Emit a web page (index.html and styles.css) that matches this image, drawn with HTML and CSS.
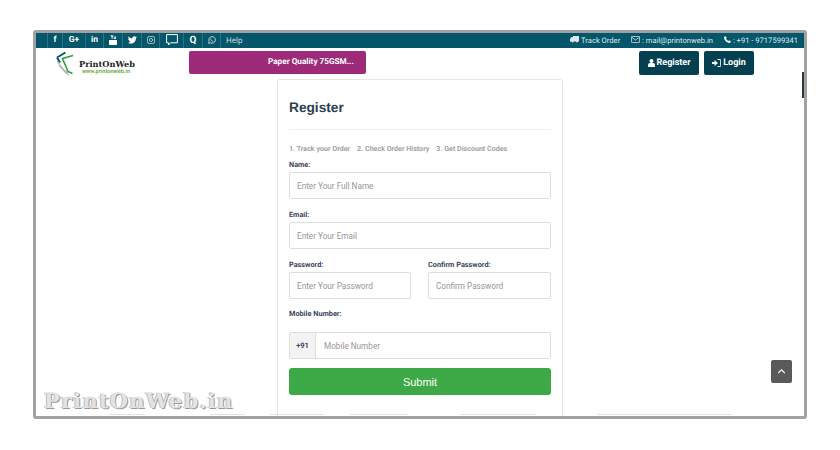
FILE: index.html
```html
<!DOCTYPE html>
<html lang="en">
<head>
    <meta charset="UTF-8">
    <title>Register - PrintOnWeb</title>
    <link rel="stylesheet" href="styles.css">
</head>
<body>
    <div class="frame">
        <div class="topbar">
            <ul class="social">
                <li class="w15"><b>f</b></li>
                <li class="w23"><b>G+</b></li>
                <li class="w18"><b>in</b></li>
                <li class="w19">
                    <svg width="8" height="10" viewBox="0 0 8 10"><path fill="#fff" d="M1.500 0h1l.6 1.600L3.700 0h.8L3.500 2.600V4h-.8V2.600zM4.800 1.200h.7v2h.8v-2H7V4H4.800zM0 5h8v4a1 1 0 0 1-1 1H1a1 1 0 0 1-1-1z"/></svg>
                </li>
                <li class="w19">
                    <svg width="9" height="8" viewBox="0 0 10 9"><path fill="#fff" d="M10 1.500 8.900 2.500C8.900 6 6.400 8.500 3.300 8.500 2 8.500.9 8.100 0 7.500c1.100.1 2.200-.2 3-.9-.9 0-1.700-.6-2-1.500h.9C.9 4.800.2 4 .2 3c.3.100.6.200.9.200C.2 2.500 0 1.300.5.500 1.600 1.800 3.100 2.600 4.900 2.700 4.600 1.300 5.600.2 6.900.2c.6 0 1.200.3 1.600.7L9.700.5 9 1.700z"/></svg>
                </li>
                <li class="w18">
                    <svg width="8" height="8" viewBox="0 0 9 9" fill="none" stroke="#b9ccd1"><rect x=".5" y=".5" width="8" height="8" rx="2"/><circle cx="4.500" cy="4.500" r="1.800"/></svg>
                </li>
                <li class="w24">
                    <svg width="12" height="12" viewBox="0 0 12 12" fill="none" stroke="#fff"><path d="M.6.6h10.800v8.200H4.500L2.500 11V8.800H.6z"/></svg>
                </li>
                <li class="w19"><b class="q">Q</b></li>
                <li class="w18">
                    <svg width="8" height="8" viewBox="0 0 9 9" fill="none" stroke="#cfdde0"><path d="M.7 8.300 1.300 6A3.700 3.700 0 1 1 3 7.700z"/><path d="M3 2.800c0 1.800 1.200 3.100 3 3.300"/></svg>
                </li>
            </ul>
            <span class="help">Help</span>
            <div class="contact">
                <span class="track">
                    <svg width="9" height="7" viewBox="0 0 9 7"><path fill="#dfe9eb" d="M3 0h6v5.500H8a1 1 0 0 1-2 0H3.500a1 1 0 0 1-2 0H0V3l1.500-2H3z"/></svg>
                    Track Order
                </span>
                <span class="mail">
                    <svg width="9" height="7" viewBox="0 0 9 7" fill="none" stroke="#dfe9eb" stroke-width=".8"><rect x=".4" y=".4" width="8.200" height="6.200" rx=".8"/><path d="m.6 1.200 3.900 2.800 3.900-2.800"/></svg>
                    : mail@printonweb.in
                </span>
                <span>
                    <svg width="7" height="7" viewBox="0 0 7 7"><path fill="#fff" d="M1.500 0 2.700 1.700 2 2.700C2.500 3.700 3.300 4.500 4.300 5l1-.7L7 5.500C6.500 6.500 5.700 7 5 7 2.500 6.500.5 4.500 0 2 0 1.300.5.500 1.500 0z"/></svg>
                    : +91 - 9717599341
                </span>
            </div>
        </div>

        <div class="header">
            <div class="logo">
                <svg width="27" height="27" viewBox="0 0 27 27" fill="none">
                    <path d="M1 7.500 9.500 2.500M1 7.500l3 5" stroke="#0b5468" stroke-width="2"/>
                    <path d="M1 11l7 9 4 3M3 15l6 7 4 3" stroke="#b5b5b5" stroke-width="1.200"/>
                    <path d="M17 5.500 6.500 8.500 12 21.500l4.500 2" stroke="#2f9e3f" stroke-width="1.600"/>
                </svg>
                <div class="logo-text">
                    <span class="logo-name">PrintOnWeb</span>
                    <span class="logo-url">www.printonweb.in</span>
                </div>
            </div>
            <div class="promo">Paper Quality 75GSM...</div>
            <div class="auth">
                <a class="auth-btn btn-register">
                    <svg width="7" height="8" viewBox="0 0 7 8"><circle cx="3.500" cy="2" r="2" fill="#fff"/><path fill="#fff" d="M0 8V6a2 2 0 0 1 2-2h3a2 2 0 0 1 2 2v2z"/></svg>
                    Register
                </a>
                <a class="auth-btn btn-login">
                    <svg width="9" height="8" viewBox="0 0 9 8" fill="#fff"><path d="M0 3h2.500V1L6 4 2.500 7V5H0z"/><path d="M5.500.5H8a.7.700 0 0 1 .7.700v5.600a.7.700 0 0 1-.7.700H5.500" fill="none" stroke="#fff"/></svg>
                    Login
                </a>
            </div>
        </div>

        <div class="card">
            <h2>Register</h2>
            <ol class="steps">
                <li>1. Track your Order</li>
                <li>2. Check Order History</li>
                <li>3. Get Discount Codes</li>
            </ol>
            <form>
                <label class="lbl">Name:</label>
                <input class="inp" type="text" placeholder="Enter Your Full Name">
                <label class="lbl lbl-next">Email:</label>
                <input class="inp" type="email" placeholder="Enter Your Email">
                <div class="two-col">
                    <div>
                        <label class="lbl">Password:</label>
                        <input class="inp" type="password" placeholder="Enter Your Password">
                    </div>
                    <div>
                        <label class="lbl">Confirm Password:</label>
                        <input class="inp" type="password" placeholder="Confirm Password">
                    </div>
                </div>
                <label class="lbl lbl-mobile">Mobile Number:</label>
                <div class="phone">
                    <span class="prefix">+91</span>
                    <input type="text" placeholder="Mobile Number">
                </div>
                <button type="button" class="submit">Submit</button>
            </form>
        </div>

        <div class="footer-lines">
            <i class="fl1"></i><i class="fl2"></i><i class="fl3"></i><i class="fl4"></i><i class="fl5"></i><i class="fl6"></i>
        </div>

        <div class="thumb"></div>
        <div class="watermark">PrintOnWeb.in</div>
        <a class="to-top">
            <svg width="9" height="5" viewBox="0 0 10 6" fill="none" stroke="#fff" stroke-width="1.300"><path d="m1 5 4-4 4 4"/></svg>
        </a>
    </div>
</body>
</html>
```

FILE: styles.css
```css
* {
    box-sizing: border-box;
}
body {
    margin: 0;
    background-color: #fff;
    font-family: Roboto, "Liberation Sans", Arial, sans-serif;
    color: #333;
    text-rendering: geometricPrecision;
}
.frame {
    position: relative;
    width: 774px;
    height: 389px;
    margin: 30px 0 0 33px;
    border: 3px solid #a3a0a1;
    border-radius: 3px;
    overflow: hidden;
}
.topbar {
    display: flex;
    align-items: center;
    height: 15px;
    background-color: #04566a;
    color: #dfe9eb;
    font-size: 7.6px;
}
.social {
    display: flex;
    list-style-type: none;
    margin: 0 0 0 11px;
    padding: 0;
    border-left: 1px solid #2b7283;
}
.social li {
    display: flex;
    align-items: center;
    justify-content: center;
    height: 15px;
    padding-bottom: 1px;
    border-right: 1px solid #2b7283;
    color: #fff;
    font-size: 8.5px;
}
.w15 { width: 15px; }
.w18 { width: 18px; }
.w19 { width: 19px; }
.w23 { width: 23px; }
.w24 { width: 24px; }
.q {
    font-size: 10px;
}
.help {
    margin-left: 5px;
    padding-bottom: 1px;
    font-size: 8px;
    color: #c5d6da;
}
.contact {
    display: flex;
    gap: 11px;
    margin-left: auto;
    margin-right: 6px;
    padding-bottom: 1px;
}
.header {
    display: flex;
    align-items: flex-start;
    height: 31px;
}
.logo {
    display: flex;
    align-items: flex-start;
    width: 133px;
    margin: 2px 0 0 20px;
}
.logo-text {
    display: flex;
    flex-direction: column;
    margin: 10px 0 0 -4px;
}
.logo-name {
    font-family: "DejaVu Serif", serif;
    font-size: 8.2px;
    font-weight: bold;
    color: #1d1d1d;
    line-height: 9px;
}
.logo-url {
    margin-left: 3px;
    font-size: 5.6px;
    font-weight: bold;
    color: #6fb04a;
    line-height: 7px;
}
.promo {
    width: 177px;
    height: 23px;
    margin-top: 3px;
    padding-left: 79px;
    border-radius: 2px;
    background-color: #9e2a7a;
    color: #fff;
    font-size: 8.2px;
    font-weight: bold;
    line-height: 23px;
}
.auth {
    display: flex;
    gap: 5px;
    margin: 3px 0 0 273px;
}
.auth-btn {
    display: flex;
    align-items: center;
    justify-content: center;
    gap: 2px;
    height: 24px;
    border-radius: 2px;
    background-color: #04404f;
    color: #fff;
    font-size: 9px;
    font-weight: bold;
}
.btn-register {
    width: 60px;
}
.btn-login {
    width: 50px;
}
.card {
    width: 286px;
    height: 400px;
    margin-left: 241px;
    padding: 0 11px;
    border: 1px solid #e6e6e6;
    border-radius: 3px;
}
h2 {
    height: 32px;
    margin: 18px 0 0;
    border-bottom: 1px solid #eee;
    font-family: "Liberation Sans", Arial, sans-serif;
    font-size: 13.7px;
    line-height: 19px;
    color: #2c3e50;
}
.steps {
    display: flex;
    gap: 7px;
    list-style-type: none;
    margin: 14px 0 0;
    padding: 0;
    font-size: 7.1px;
    font-weight: bold;
    line-height: 10px;
    color: #a79f9f;
}
.lbl {
    display: block;
    height: 10px;
    margin: 0;
    font-size: 7.3px;
    font-weight: bold;
    line-height: 10px;
    color: #39465e;
}
form > .lbl:first-child {
    margin-top: 6px;
}
.inp {
    display: block;
    width: 100%;
    height: 27px;
    margin-top: 2px;
    padding: 0 7px;
    border: 1px solid #ddd;
    border-radius: 2px;
    font-family: inherit;
    font-size: 8.2px;
}
.lbl-next {
    margin-top: 11px;
}
::placeholder {
    color: #9a9494;
    opacity: 1;
}
.two-col {
    display: grid;
    grid-template-columns: 122px 123px;
    column-gap: 17px;
    margin-top: 11px;
}
.lbl-mobile {
    margin-top: 10px;
}
.phone {
    display: flex;
    height: 27px;
    margin-top: 13px;
    border: 1px solid #ddd;
    border-radius: 2px;
}
.prefix {
    width: 26px;
    border-right: 1px solid #ddd;
    background-color: #f3f3f3;
    color: #39465e;
    font-size: 7.5px;
    font-weight: bold;
    line-height: 25px;
    text-align: center;
}
.phone input {
    flex: 1;
    min-width: 0;
    padding: 0 8px;
    border: none;
    background: none;
    font-family: inherit;
    font-size: 8.2px;
}
.submit {
    display: block;
    width: 100%;
    height: 27px;
    margin-top: 9px;
    border: none;
    border-radius: 3px;
    background-color: #3ca846;
    color: #fff;
    font-family: "Liberation Sans", Arial, sans-serif;
    font-size: 11px;
}
.footer-lines {
    position: absolute;
    left: 0;
    right: 0;
    bottom: 0;
    height: 2px;
}
.footer-lines i {
    position: absolute;
    top: 0;
    height: 1px;
    background-color: #e4e4e4;
}
.fl1 { left: 72px; width: 37px; }
.fl2 { left: 174px; width: 35px; }
.fl3 { left: 234px; width: 54px; }
.fl4 { left: 314px; width: 58px; }
.fl5 { left: 424px; width: 76px; }
.fl6 { left: 561px; width: 135px; }
.thumb {
    position: absolute;
    top: 39px;
    right: 0;
    width: 2px;
    height: 26px;
    background-color: #2f3a40;
}
.watermark {
    position: absolute;
    left: 8px;
    top: 355px;
    font-family: "DejaVu Serif", serif;
    font-size: 21px;
    font-weight: bold;
    letter-spacing: 1.2px;
    color: #e3e3e3;
    text-shadow: 1px 1px 0 #9a9a9a, -1px 0 0 #bbb;
    line-height: 26px;
}
.to-top {
    position: absolute;
    top: 327px;
    left: 735px;
    display: flex;
    align-items: center;
    justify-content: center;
    width: 21px;
    height: 23px;
    border-radius: 2px;
    background-color: #5a5a5a;
}
```
